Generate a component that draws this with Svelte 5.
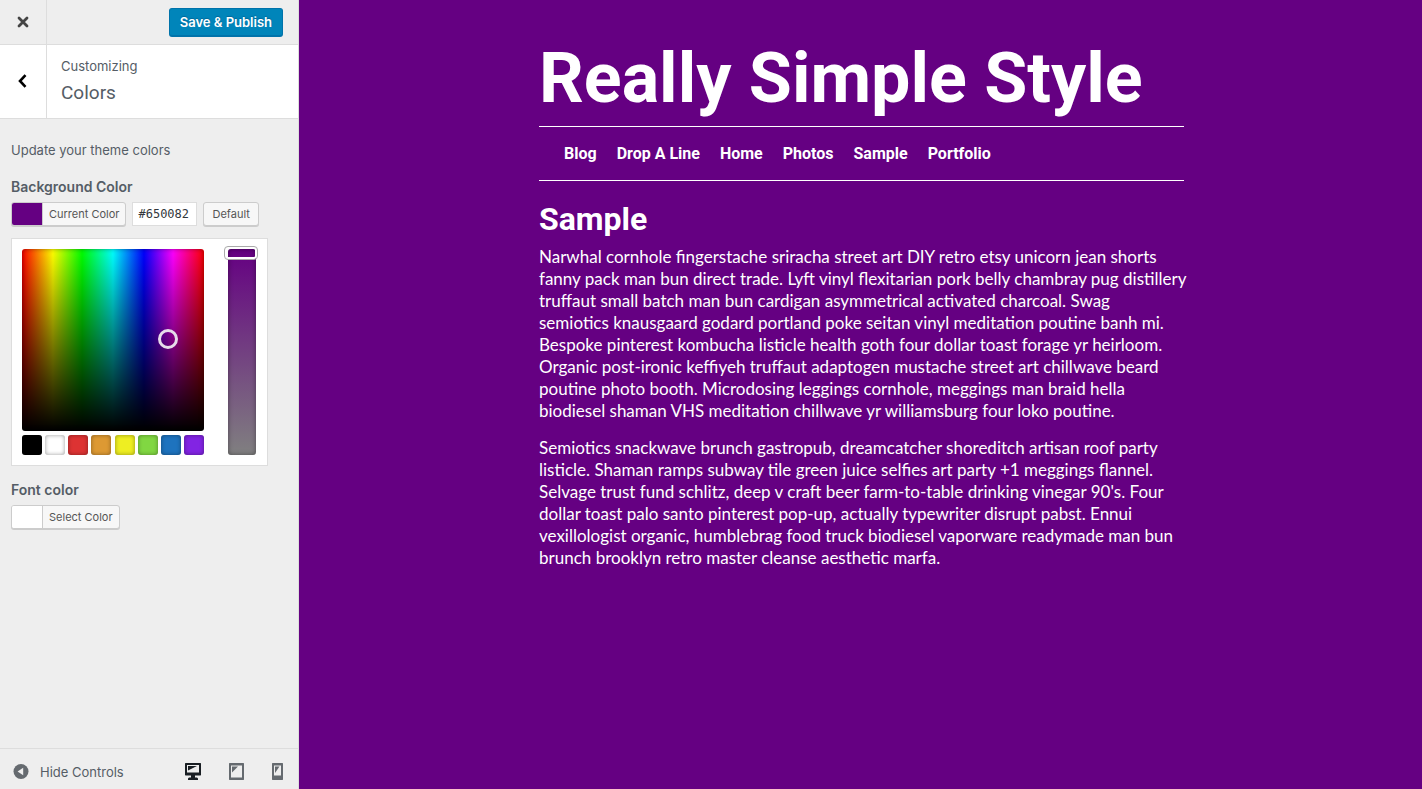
<script>
  const navigation = ['Blog', 'Drop A Line', 'Home', 'Photos', 'Sample', 'Portfolio'];
  const swatches = [
    { name: 'Black', value: '#000000' },
    { name: 'White', value: '#ffffff' },
    { name: 'Red', value: '#dd3333' },
    { name: 'Orange', value: '#dd9933' },
    { name: 'Yellow', value: '#eeee22' },
    { name: 'Green', value: '#81d742' },
    { name: 'Blue', value: '#1e73be' },
    { name: 'Purple', value: '#8224e3' }
  ];
  let color = $state('#650082');
  let saturation = $state(100);
</script>

<div class="customizer">
  <aside class="sidebar">
    <header class="actions">
      <button class="close" aria-label="Close">
        <svg width="12" height="12" viewBox="0 0 12 12"><path d="M2 2l8 8M10 2l-8 8" fill="none" stroke="#444" stroke-width="2.8" stroke-linecap="round" /></svg>
      </button>
      <button class="save">Save &amp; Publish</button>
    </header>

    <div class="section-head">
      <button class="back" aria-label="Back">
        <svg width="10" height="16" viewBox="0 0 10 16"><path d="M7.500 1.200L2 7l5.500 5.800" fill="none" stroke="#000" stroke-width="2.600" /></svg>
      </button>
      <div class="section-title">
        <span>Customizing</span>
        <h3>Colors</h3>
      </div>
    </div>

    <div class="controls">
      <p class="description">Update your theme colors</p>

      <section class="control">
        <h4>Background Color</h4>
        <div class="row">
          <button class="color-button">
            <span class="chip" style="background: {color}"></span><span class="label">Current Color</span>
          </button>
          <input class="hex" type="text" aria-label="Background color value" bind:value={color} />
          <button class="default" onclick={() => (color = '#650082')}>Default</button>
        </div>
        <div class="picker">
          <div class="picker-main">
            <div class="spectrum"><span class="ring"></span></div>
            <div class="swatches">
              {#each swatches as swatch}
                <button aria-label={swatch.name} style="background: {swatch.value}" onclick={() => (color = swatch.value)}></button>
              {/each}
            </div>
          </div>
          <input class="strip" type="range" min="0" max="100" aria-label="Saturation" bind:value={saturation} />
        </div>
      </section>

      <section class="control">
        <h4>Font color</h4>
        <button class="color-button">
          <span class="chip" style="background: #ffffff"></span><span class="label">Select Color</span>
        </button>
      </section>
    </div>

    <footer class="footer">
      <button class="hide">
        <svg width="16" height="16" viewBox="0 0 16 16"><circle cx="8" cy="7.500" r="7.500" fill="#656a6f" /><path d="M10.200 3.800v7.400L4.600 7.500z" fill="#eee" /></svg>
        Hide Controls
      </button>
      <div class="devices">
        <button aria-label="Desktop preview">
          <svg width="16" height="17" viewBox="0 0 16 17"><path fill="#191e23" fill-rule="evenodd" d="M.5 0h15l.5.5V12l-.5.500H10v2h2l1 1V17H3v-1.500l1-1h2v-2H.5L0 12V.5zM2 2v7.500h12V2z" /><path fill="#191e23" d="M3 3h9L3 7.500z" /></svg>
        </button>
        <button aria-label="Tablet preview">
          <svg width="15" height="17" viewBox="0 0 15 17"><path fill="#656a6f" fill-rule="evenodd" d="M.5 0h14l.5.5v16l-.5.5H.5l-.5-.5V.5zM2 2.500v12h11v-12z" /><path fill="#656a6f" d="M3 3.500h6l-6 6z" /></svg>
        </button>
        <button aria-label="Mobile preview">
          <svg width="11" height="17" viewBox="0 0 11 17"><path fill="#656a6f" fill-rule="evenodd" d="M.5 0h10l.5.500v16l-.5.5H.5l-.5-.5V.5zM2 2.500v10h7v-10z" /><path fill="#656a6f" d="M3 3.500h4.500L3 10z" /></svg>
        </button>
      </div>
    </footer>
  </aside>

  <main class="preview">
    <div class="page">
      <h1>Really Simple Style</h1>
      <nav aria-label="Site">
        <ul>
          {#each navigation as item}
            <li><a href="#{item.toLowerCase().replaceAll(' ', '-')}">{item}</a></li>
          {/each}
        </ul>
      </nav>
      <article>
        <h2>Sample</h2>
        <p>
          Narwhal cornhole fingerstache sriracha street art DIY retro etsy unicorn jean shorts<br />
          fanny pack man bun direct trade. Lyft vinyl flexitarian pork belly chambray pug distillery<br />
          truffaut small batch man bun cardigan asymmetrical activated charcoal. Swag<br />
          semiotics knausgaard godard portland poke seitan vinyl meditation poutine banh mi.<br />
          Bespoke pinterest kombucha listicle health goth four dollar toast forage yr heirloom.<br />
          Organic post-ironic keffiyeh truffaut adaptogen mustache street art chillwave beard<br />
          poutine photo booth. Microdosing leggings cornhole, meggings man braid hella<br />
          biodiesel shaman VHS meditation chillwave yr williamsburg four loko poutine.
        </p>
        <p>
          Semiotics snackwave brunch gastropub, dreamcatcher shoreditch artisan roof party<br />
          listicle. Shaman ramps subway tile green juice selfies art party +1 meggings flannel.<br />
          Selvage trust fund schlitz, deep v craft beer farm-to-table drinking vinegar 90's. Four<br />
          dollar toast palo santo pinterest pop-up, actually typewriter disrupt pabst. Ennui<br />
          vexillologist organic, humblebrag food truck biodiesel vaporware readymade man bun<br />
          brunch brooklyn retro master cleanse aesthetic marfa.
        </p>
      </article>
    </div>
  </main>
</div>

<style>
  :global(body) {
    margin: 0;
  }
  .customizer {
    display: flex;
    min-height: 100vh;
    font-family: Inter, 'Open Sans', sans-serif;
    font-size: 13px;
    color: #555d66;
  }
  .customizer * {
    box-sizing: border-box;
  }
  button {
    font: inherit;
    color: inherit;
    background: none;
    border: 0;
    padding: 0;
    cursor: pointer;
  }
  svg {
    display: block;
  }
  h1, h2, h3, h4, p, ul {
    margin: 0;
  }
  .sidebar {
    flex: 0 0 299px;
    display: flex;
    flex-direction: column;
    background: #eee;
    border-right: 1px solid #ddd;
  }
  .actions {
    display: flex;
    justify-content: space-between;
    align-items: center;
    height: 45px;
    padding-right: 15px;
    border-bottom: 1px solid #ddd;
  }
  .close, .back {
    display: grid;
    place-items: center;
    align-self: stretch;
    width: 47px;
    border-right: 1px solid #ddd;
  }
  .save {
    height: 29px;
    padding: 0 10px;
    border: 1px solid #0073aa;
    border-bottom-width: 2px;
    border-radius: 3px;
    background: #0085ba;
    color: #fff;
    font-weight: 600;
    font-size: 13px;
    text-shadow: 0 -1px 1px #006799;
  }
  .section-head {
    display: flex;
    height: 74px;
    background: #fff;
    border-bottom: 1px solid #ddd;
  }
  .section-title {
    display: flex;
    flex-direction: column;
    justify-content: center;
    gap: 3px;
    padding-left: 14px;
    line-height: 20px;
  }
  h3 {
    font-family: Roboto, sans-serif;
    font-size: 19px;
    font-weight: 400;
    line-height: 28px;
  }
  .controls {
    flex: 1;
    padding: 21px 11px;
  }
  .description {
    line-height: 20px;
    margin-bottom: 15px;
  }
  .control {
    margin-bottom: 12px;
  }
  h4 {
    font-size: 14px;
    font-weight: 600;
    line-height: 24px;
    margin-bottom: 3px;
  }
  .row {
    display: flex;
    align-items: flex-start;
    margin-bottom: 12px;
  }
  .color-button, .default {
    height: 24px;
    border: 1px solid #ccc;
    border-radius: 3px;
    background: #f7f7f7;
    box-shadow: 0 1px 0 #ccc;
    font-size: 11px;
    color: #555;
  }
  .color-button {
    display: flex;
    align-items: stretch;
    overflow: hidden;
  }
  .chip {
    width: 30px;
  }
  .label {
    padding: 0 6px;
    line-height: 22px;
    border-left: 1px solid #ccc;
  }
  .hex {
    width: 65px;
    height: 24px;
    margin: 0 6px;
    padding: 0 5px;
    border: 1px solid #ddd;
    background: #fff;
    color: #32373c;
    font-family: 'DejaVu Sans Mono', monospace;
    font-size: 12px;
  }
  .default {
    padding: 0 8px;
  }
  .picker {
    display: flex;
    gap: 24px;
    width: 257px;
    padding: 10px;
    border: 1px solid #ddd;
    background: #fff;
  }
  .spectrum {
    position: relative;
    width: 182px;
    height: 182px;
    border-radius: 3px;
    background:
      linear-gradient(transparent, #000),
      linear-gradient(to right, #f00, #ff0 17%, #0f0 33%, #0ff 50%, #00f 67%, #f0f 83%, #f00);
    box-shadow: inset 0 0 5px rgba(0, 0, 0, 0.4);
  }
  .ring {
    position: absolute;
    left: 136px;
    top: 80px;
    width: 20px;
    height: 20px;
    border: 3px solid #e7dcea;
    border-radius: 50%;
  }
  .swatches {
    display: flex;
    justify-content: space-between;
    margin-top: 4px;
  }
  .swatches button {
    width: 20px;
    height: 20px;
    border-radius: 3px;
    box-shadow: inset 0 0 4px rgba(0, 0, 0, 0.4);
  }
  .strip {
    appearance: none;
    writing-mode: vertical-lr;
    direction: rtl;
    width: 28px;
    height: 206px;
    margin: 0;
    border-radius: 3px;
    background: linear-gradient(#650082, #808080);
    box-shadow: inset 0 0 5px rgba(0, 0, 0, 0.4);
  }
  .strip::-webkit-slider-runnable-track {
    margin: -3px 0;
  }
  .strip::-webkit-slider-thumb {
    appearance: none;
    box-sizing: border-box;
    width: 34px;
    height: 14px;
    margin-left: -3px;
    border: 1px solid #aaa;
    border-radius: 4px;
    background: transparent;
    box-shadow: inset 0 0 0 2px #fff;
  }
  .footer {
    display: flex;
    justify-content: space-between;
    align-items: center;
    height: 41px;
    padding: 5px 15px 0 13px;
    border-top: 1px solid #ddd;
  }
  .hide {
    display: flex;
    align-items: center;
    gap: 11px;
  }
  .devices {
    display: flex;
    gap: 28px;
  }
  .preview {
    flex: 1;
    min-width: 0;
    padding: 0 20px 0 22px;
    background: #650082;
    color: #fff;
  }
  .page {
    max-width: 645px;
    margin: 0 auto;
    padding-top: 38px;
  }
  h1, h2, nav {
    font-family: Roboto, sans-serif;
    font-weight: 700;
  }
  h1 {
    font-size: 70px;
    line-height: 80px;
    margin-bottom: 8px;
  }
  nav {
    border-top: 1px solid #fff;
    border-bottom: 1px solid #fff;
  }
  ul {
    display: flex;
    flex-wrap: wrap;
    gap: 20px;
    padding: 16px 25px 15px;
    list-style: none;
    font-size: 16px;
    line-height: 22px;
  }
  a {
    color: inherit;
    text-decoration: none;
  }
  h2 {
    font-size: 32px;
    line-height: 40px;
    margin: 18px 0 7px;
  }
  article p {
    margin-bottom: 15px;
    font-family: Lato, sans-serif;
    font-size: 17px;
    line-height: 22px;
    white-space: nowrap;
  }
</style>
